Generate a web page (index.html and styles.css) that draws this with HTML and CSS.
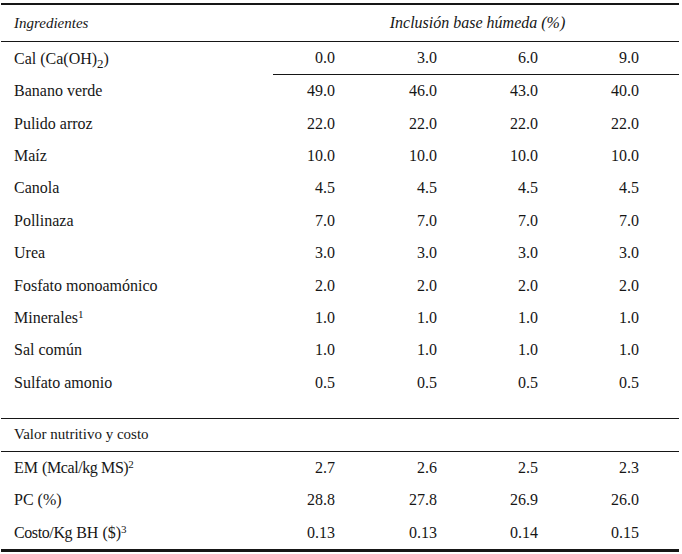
FILE: index.html
```html
<!DOCTYPE html>
<html lang="es">
<head>
<meta charset="utf-8">
<title>Ingredientes</title>
<link rel="stylesheet" href="styles.css">
</head>
<body>
<div class="table">
  <div class="row head">
    <div class="label it">Ingredientes</div>
    <div class="span it">Inclusión base húmeda (%)</div>
  </div>
  <div class="row levels">
    <div class="label"><span>Cal (Ca(OH)<sub>2</sub>)</span></div>
    <div class="num">0.0</div><div class="num">3.0</div><div class="num">6.0</div><div class="num">9.0</div>
  </div>
  <div class="body">
    <div class="row"><div class="label">Banano verde</div><div class="num">49.0</div><div class="num">46.0</div><div class="num">43.0</div><div class="num">40.0</div></div>
    <div class="row"><div class="label">Pulido arroz</div><div class="num">22.0</div><div class="num">22.0</div><div class="num">22.0</div><div class="num">22.0</div></div>
    <div class="row"><div class="label">Maíz</div><div class="num">10.0</div><div class="num">10.0</div><div class="num">10.0</div><div class="num">10.0</div></div>
    <div class="row"><div class="label">Canola</div><div class="num">4.5</div><div class="num">4.5</div><div class="num">4.5</div><div class="num">4.5</div></div>
    <div class="row"><div class="label">Pollinaza</div><div class="num">7.0</div><div class="num">7.0</div><div class="num">7.0</div><div class="num">7.0</div></div>
    <div class="row"><div class="label">Urea</div><div class="num">3.0</div><div class="num">3.0</div><div class="num">3.0</div><div class="num">3.0</div></div>
    <div class="row"><div class="label">Fosfato monoamónico</div><div class="num">2.0</div><div class="num">2.0</div><div class="num">2.0</div><div class="num">2.0</div></div>
    <div class="row"><div class="label">Minerales<sup>1</sup></div><div class="num">1.0</div><div class="num">1.0</div><div class="num">1.0</div><div class="num">1.0</div></div>
    <div class="row"><div class="label">Sal común</div><div class="num">1.0</div><div class="num">1.0</div><div class="num">1.0</div><div class="num">1.0</div></div>
    <div class="row"><div class="label">Sulfato amonio</div><div class="num">0.5</div><div class="num">0.5</div><div class="num">0.5</div><div class="num">0.5</div></div>
  </div>
  <div class="spacer"></div>
  <div class="row section">
    <div class="label small">Valor nutritivo y costo</div>
  </div>
  <div class="row tail"><div class="label">EM <span class="cond">(Mcal/kg MS)</span><sup>2</sup></div><div class="num">2.7</div><div class="num">2.6</div><div class="num">2.5</div><div class="num">2.3</div></div>
  <div class="row tail"><div class="label">PC (%)</div><div class="num">28.8</div><div class="num">27.8</div><div class="num">26.9</div><div class="num">26.0</div></div>
  <div class="row tail last"><div class="label"><span class="cond">Costo/Kg</span> BH ($)<sup>3</sup></div><div class="num">0.13</div><div class="num">0.13</div><div class="num">0.14</div><div class="num">0.15</div></div>
</div>
</body>
</html>
```

FILE: styles.css
```css
html, body {
  margin: 0;
  padding: 0;
  background: #ffffff;
}

body {
  font-family: "Liberation Serif", "Times New Roman", serif;
  font-size: 16px;
  color: #161616;
}

.table {
  width: 678px;
  margin: 3px 0 0 1px;
  border-top: 2px solid #161616;
  border-bottom: 3px solid #161616;
}

.row {
  display: grid;
  grid-template-columns: 272px 102px 102px 101px 101px;
  align-items: center;
  height: 32.4px;
}

.label {
  padding-left: 13px;
  white-space: nowrap;
}

.num {
  text-align: right;
  padding-right: 40px;
}

.it {
  font-style: italic;
  font-size: 15px;
}

.head {
  height: 36px;
  border-bottom: 1px solid #161616;
}

.span {
  grid-column: 2 / 6;
  text-align: center;
  padding-left: 3px;
  font-size: 16px;
}

.levels {
  height: 33px;
  align-items: stretch;
}

.levels > div {
  display: flex;
  align-items: center;
}

.levels .num {
  justify-content: flex-end;
  border-bottom: 1px solid #161616;
}

.spacer {
  height: 19px;
  border-bottom: 1px solid #161616;
}

.section {
  height: 32px;
  border-bottom: 1px solid #161616;
}

.small {
  font-size: 15px;
}

.tail {
  height: 32.4px;
}

.cond {
  letter-spacing: -0.4px;
}

sub {
  font-size: 13px;
  vertical-align: -4px;
  line-height: 0;
}

sup {
  font-size: 11px;
  vertical-align: 5px;
  line-height: 0;
}
```
